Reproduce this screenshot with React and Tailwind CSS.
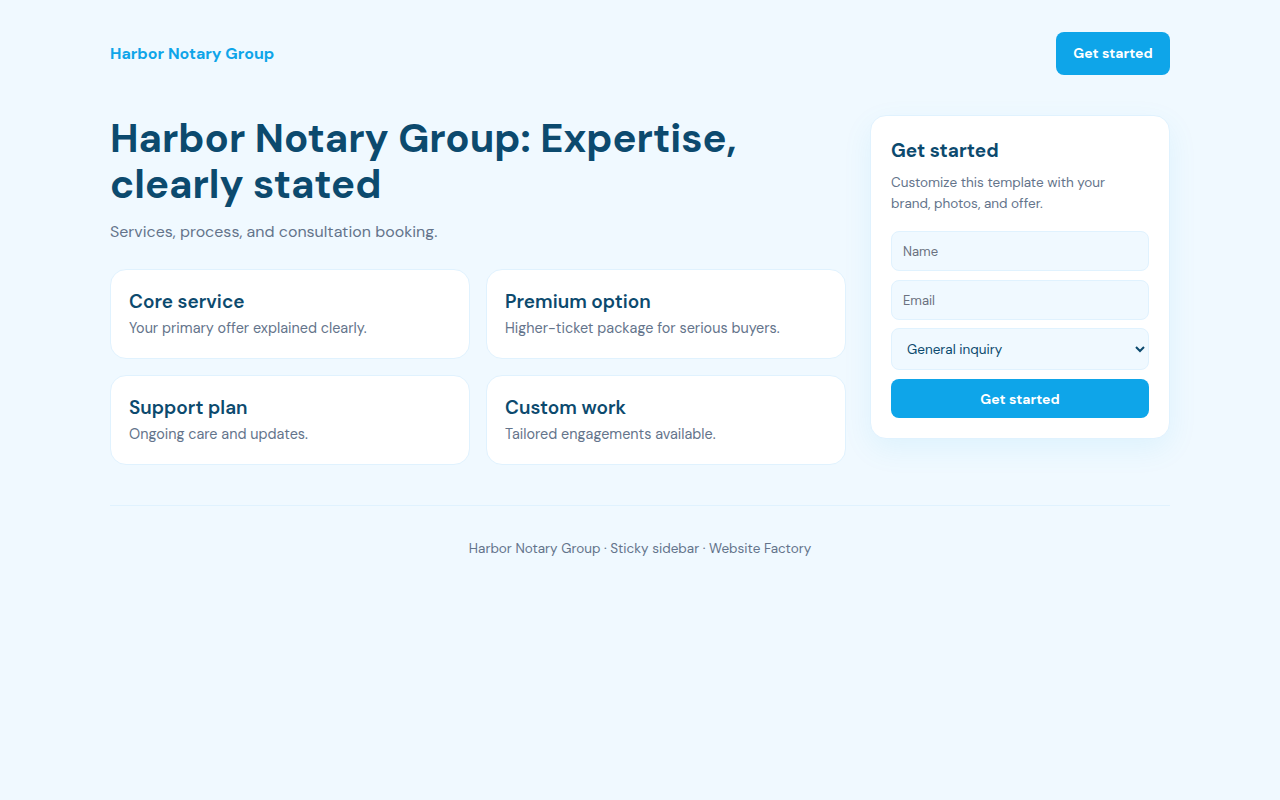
import React from "react";

const font = { fontFamily: '"DM Sans", Inter, "Noto Sans", sans-serif' };

function ServiceCard({ title, text }) {
  return (
    <div className="bg-white border border-[#e0f2fe] rounded-2xl px-[18px] pt-[19px] pb-[19px]">
      <h3 className="text-[19px] leading-[26px] font-semibold text-[#0c4a6e]">{title}</h3>
      <p className="text-[14.4px] leading-[22px] text-[#64748b] mt-[2px]">{text}</p>
    </div>
  );
}

const field =
  "h-10 w-full rounded-lg bg-[#f0f9ff] border border-[#e0f2fe] px-[11px] text-[13px] placeholder:text-[#6b7280] outline-none";

export default function App() {
  return (
    <div className="min-h-[800px] bg-[#f0f9ff]" style={font}>
      <div className="w-[1060px] mx-auto">
        <header className="flex items-center justify-between pt-8 pb-[40px]">
          <a className="text-base font-bold text-[#0ea5e9]">Harbor Notary Group</a>
          <button className="h-[43px] w-[114px] pb-[2px] rounded-lg bg-[#0ea5e9] text-white text-sm font-bold">
            Get started
          </button>
        </header>

        <main className="flex gap-6 items-start">
          <section className="flex-1">
            <h1 className="text-[40px] leading-[46px] font-bold text-[#0c4a6e]">
              Harbor Notary Group: Expertise,
              <br />
              clearly stated
            </h1>
            <p className="mt-[13px] text-base leading-6 text-[#64748b]">
              Services, process, and consultation booking.
            </p>
            <div className="grid grid-cols-2 gap-x-4 gap-y-4 mt-[25px]">
              <ServiceCard title="Core service" text="Your primary offer explained clearly." />
              <ServiceCard title="Premium option" text="Higher-ticket package for serious buyers." />
              <ServiceCard title="Support plan" text="Ongoing care and updates." />
              <ServiceCard title="Custom work" text="Tailored engagements available." />
            </div>
          </section>

          <aside className="w-[300px] bg-white border border-[#e0f2fe] rounded-2xl px-5 pt-[22px] pb-5 shadow-[0_10px_30px_rgba(14,165,233,0.08)]">
            <h2 className="text-[19px] leading-[26px] font-bold text-[#0c4a6e]">Get started</h2>
            <p className="mt-2 max-w-[240px] text-[13.5px] leading-[21px] text-[#64748b]">
              Customize this template with your brand, photos, and offer.
            </p>
            <form className="mt-[17px] flex flex-col">
              <input placeholder="Name" className={field} />
              <input placeholder="Email" className={`${field} mt-[9px]`} />
              <select className="mt-2 h-[42px] w-full rounded-lg bg-[#f0f9ff] border border-[#e0f2fe] px-[11px] text-[13.5px] text-[#0c4a6e] outline-none">
                <option>General inquiry</option>
              </select>
              <button
                type="button"
                className="mt-[9px] h-[39px] w-full rounded-lg bg-[#0ea5e9] text-white text-sm font-bold"
              >
                Get started
              </button>
            </form>
          </aside>
        </main>

        <footer className="mt-10 border-t border-[#e0f2fe] pt-[33px] text-center text-[13.5px] text-[#64748b]">
          Harbor Notary Group · Sticky sidebar · Website Factory
        </footer>
      </div>
    </div>
  );
}
